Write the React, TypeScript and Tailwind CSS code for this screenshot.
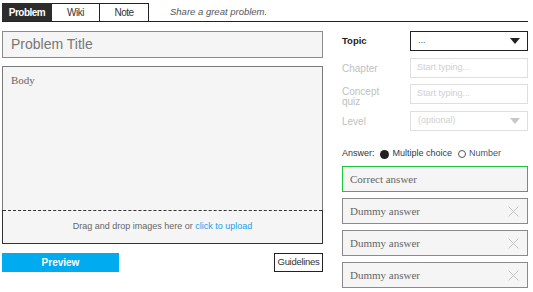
import React from 'react';

const sans = "font-['Liberation_Sans',Arial,sans-serif]";
const serif = "font-['Liberation_Serif','Times_New_Roman',serif]";

const Caret = ({ color }: { color: string }) => (
  <svg width="10" height="6" viewBox="0 0 10 6" className="shrink-0">
    <path d="M0 0 L10 0 L5 6 Z" fill={color} />
  </svg>
);

const Cross = () => (
  <svg width="11" height="11" viewBox="0 0 11 11" className="shrink-0">
    <path d="M0.5 0.5 L10.5 10.5 M10.5 0.5 L0.5 10.5" stroke="#c4c4c4" strokeWidth="1" />
  </svg>
);

const Field = ({ label }: { label: string }) => (
  <div className="flex items-center h-[20px]">
    <div className="w-[68px] text-[10px] text-[#c0c0c0]">{label}</div>
    <div className="w-[118px] h-[20px] border border-[#dedede] bg-white flex items-center px-[6px] text-[9px] text-[#cfcfcf]">
      Start typing...
    </div>
  </div>
);

const DummyAnswer = () => (
  <div className="h-[26px] border border-[#8a8a8a] bg-[#f5f5f5] flex items-center justify-between pl-[7px] pr-[8px]">
    <span className={`${serif} text-[11px] text-[#666]`}>Dummy answer</span>
    <Cross />
  </div>
);

export default function App() {
  return (
    <div className={`${sans} w-[533px] h-[292px] bg-white pl-[2px] pt-[3px] text-[#333] overflow-hidden`}>
      {/* tabs */}
      <div className="w-[526px] h-[19px] flex items-stretch border-b border-[#222]">
        <div className="w-[50px] bg-[#2c2c2c] text-white text-[10px] font-bold flex items-center justify-center tracking-[-0.5px]">
          Problem
        </div>
        <div className="w-[48px] border-t border-r border-[#222] text-[10px] flex items-center justify-center tracking-[-0.5px]">
          Wiki
        </div>
        <div className="w-[49px] border-t border-r border-[#222] text-[10px] flex items-center justify-center tracking-[-0.5px]">
          Note
        </div>
        <div className="pl-[21px] text-[9.5px] italic text-[#555] flex items-center">Share a great problem.</div>
      </div>

      <div className="flex mt-[9px]">
        {/* left column */}
        <div className="w-[321px] flex flex-col">
          <div className="h-[27px] border border-[#8a8a8a] bg-[#f5f5f5] flex items-center px-[8px] text-[14px] text-[#777]">
            Problem Title
          </div>
          <div className="mt-[8px] h-[178px] flex flex-col bg-[#f5f5f5]">
            <div className={`flex-1 border-t border-l border-r border-[#7a7a7a] px-[8px] pt-[8px] ${serif} text-[11px] leading-none text-[#666]`}>
              Body
            </div>
            <div className="h-[34px] flex flex-col border-l border-r border-b border-[#333]">
              <div className="border-t border-dashed border-[#333]" />
              <div className="flex-1 flex items-center justify-center text-[9px] text-[#666]">
                Drag and drop images here or&nbsp;<span className="text-[#1a9fea]">click to upload</span>
              </div>
            </div>
          </div>
          <div className="mt-[9px] flex justify-between">
            <div className="w-[117px] h-[19px] bg-[#00abf0] text-white text-[10px] font-bold flex items-center justify-center">
              Preview
            </div>
            <div className="w-[49px] h-[19px] border border-[#222] text-[9.5px] flex items-center justify-center tracking-[-0.3px]">
              Guidelines
            </div>
          </div>
        </div>

        {/* right column */}
        <div className="ml-[19px] w-[186px] flex flex-col">
          <div className="flex items-center h-[20px]">
            <div className="w-[68px] text-[9.5px] font-bold text-[#222]">Topic</div>
            <div className="w-[118px] h-[20px] border-[1.5px] border-[#222] flex items-center justify-between pl-[7px] pr-[7px]">
              <span className="text-[9px] text-[#555]">...</span>
              <Caret color="#222" />
            </div>
          </div>
          <div className="mt-[7px]"><Field label="Chapter" /></div>
          <div className="mt-[6px] flex items-start h-[20px]">
            <div className="w-[68px] text-[10px] leading-[10px] text-[#c0c0c0] mt-[3px]">Concept<br />quiz</div>
            <div className="w-[118px] h-[20px] border border-[#dedede] bg-white flex items-center px-[6px] text-[9px] text-[#cfcfcf]">
              Start typing...
            </div>
          </div>
          <div className="mt-[7px] flex items-center h-[20px]">
            <div className="w-[68px] text-[10px] text-[#c0c0c0]">Level</div>
            <div className="w-[118px] h-[20px] border border-[#dedede] flex items-center justify-between pl-[7px] pr-[7px]">
              <span className="text-[9px] text-[#cfcfcf]">(optional)</span>
              <Caret color="#c8c8c8" />
            </div>
          </div>
          <div className="mt-[17px] flex items-center h-[12px] text-[9px]">
            <span className="text-[#333]">Answer:</span>
            <span className="ml-[5px] w-[9px] h-[9px] rounded-full bg-[#222]" />
            <span className="ml-[4px] text-[#2c3a55]">Multiple choice</span>
            <span className="ml-[6px] w-[8px] h-[8px] rounded-full border border-[#555]" />
            <span className="ml-[3px] text-[#4a5570]">Number</span>
          </div>
          <div className="mt-[6px] h-[26px] border border-[#22c33d] bg-[#f5f5f5] flex items-center pl-[7px]">
            <span className={`${serif} text-[11px] text-[#666]`}>Correct answer</span>
          </div>
          <div className="mt-[6px]"><DummyAnswer /></div>
          <div className="mt-[6px]"><DummyAnswer /></div>
          <div className="mt-[6px]"><DummyAnswer /></div>
        </div>
      </div>
    </div>
  );
}
